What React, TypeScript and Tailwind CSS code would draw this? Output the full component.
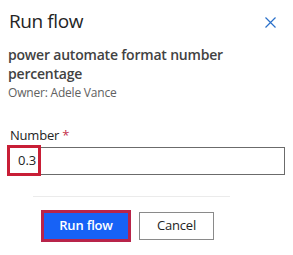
export default function App() {
  return (
    <div className="w-[293px] h-[255px] bg-white font-['Open_Sans',sans-serif] text-[#242424]">
      {/* Header */}
      <div className="flex items-start justify-between pl-[9px] pr-[17px] pt-[7px]">
        <h2 className="text-[19px] leading-[28px] font-medium tracking-[-0.4px]">Run flow</h2>
        <svg width="11" height="11" viewBox="0 0 11 11" className="mt-[10px]">
          <path d="M0.5 0.5 L10.5 10.5 M10.5 0.5 L0.5 10.5" stroke="#2a70c9" strokeWidth="1.2" fill="none" />
        </svg>
      </div>

      {/* Flow info */}
      <div className="px-[8px] mt-[10px]">
        <p className="w-[230px] text-[14px] leading-[19px] font-semibold tracking-[-0.2px] text-[#424242]">
          power automate format number percentage
        </p>
        <p className="mt-[1px] text-[12px] leading-[18px] tracking-[-0.2px] text-[#616161]">Owner: Adele Vance</p>
      </div>

      {/* Field */}
      <div className="mt-[24px] px-[8px]">
        <label className="block pl-[2px] text-[13px] leading-[18px] tracking-[-0.2px] text-[#242424]">
          Number <span className="text-[#c4314b]">*</span>
        </label>
        <div className="relative mt-[3px] h-[28px] border border-[#6b6b6b] flex items-center pl-[9px] text-[13px]">
          0.3
          <div className="absolute -left-[2px] -top-[3px] w-[34px] h-[31px] border-[3px] border-[#c81e36]" />
        </div>
      </div>

      {/* Divider */}
      <div className="mt-[21px] ml-[33px] w-[197px] h-px bg-[#ebebeb]" />

      {/* Footer */}
      <div className="mt-[13px] pl-[41px] flex items-center gap-[8px]">
        <button className="w-[90px] h-[32px] border-[3px] border-[#b8244a] bg-[#1762f6] text-white text-[13px] font-semibold tracking-[-0.2px]">
          Run flow
        </button>
        <button className="w-[75px] h-[28px] border border-[#8a8a8a] bg-white text-[13px] tracking-[-0.2px] text-[#242424]">
          Cancel
        </button>
      </div>
    </div>
  );
}
